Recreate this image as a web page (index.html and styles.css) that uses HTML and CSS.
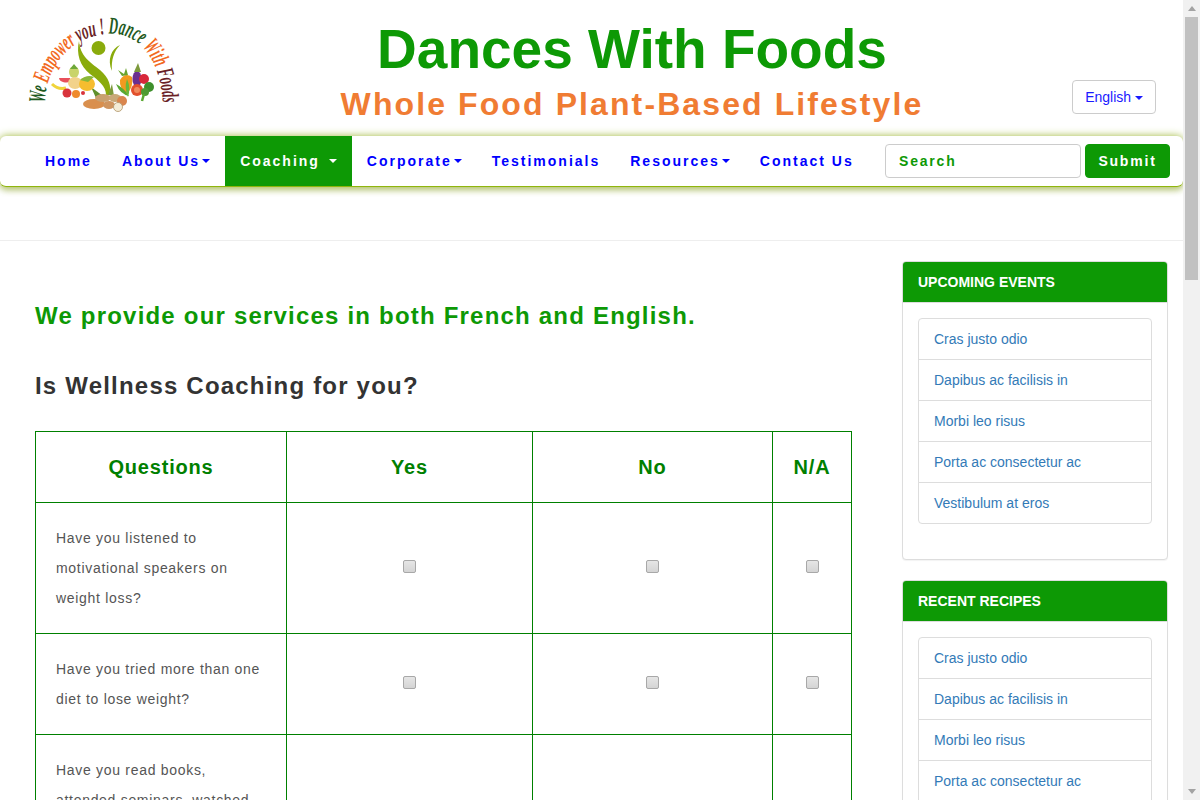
FILE: index.html
```html
<!DOCTYPE html>
<html lang="en">
<head>
<meta charset="utf-8">
<title>Dances With Foods</title>
<link rel="stylesheet" href="styles.css">
</head>
<body>
<div class="scrollbar" aria-hidden="true">
  <span class="sb-btn"><span class="sb-up"></span></span>
  <span class="sb-thumb"></span>
  <span class="sb-fill"></span>
  <span class="sb-btn"><span class="sb-down"></span></span>
</div>
<div class="page">
  <header class="masthead">
    <a class="logo" href="#">
      <svg class="logo-svg" viewBox="0 0 200 136" width="200" height="136" role="img" aria-label="Dances With Foods logo">
        <defs>
          <path id="logo-arc" d="M45 103 C 45 72, 66 40, 100 35 C 130 28, 160 48, 163 106"/>
        </defs>
        <text class="logo-text"><textPath href="#logo-arc" textLength="202" lengthAdjust="spacingAndGlyphs"><tspan class="lt-green">We </tspan><tspan class="lt-orange">Empower </tspan><tspan class="lt-red">you ! </tspan><tspan class="lt-green">Dance </tspan><tspan class="lt-orange">With </tspan><tspan class="lt-red">Foods</tspan></textPath></text>
        <path class="fig" d="M79 41 C 80 56, 90 62, 100 70 C 109 78, 112 86, 109 95 L 106 95 C 106 86, 98 80, 90 74 C 80 66, 76 54, 79 41Z"/>
        <circle class="fig" cx="98.500" cy="48" r="7"/>
        <path class="fig" d="M120 45 C 111 49, 107 60, 112 71 C 111 60, 114 51, 120 45Z"/>
        <path fill="#5f8f2a" d="M91 87 L 103 96 L 96 98Z"/>
        <path fill="#7d9a3c" d="M108 95 L 112 84 L 114 96Z"/>
        <ellipse cx="74" cy="72" rx="5" ry="6" fill="#c9d46a"/>
        <path fill="#6ea83a" d="M74 64 L 70 69 L 78 69Z"/>
        <path fill="#e8505b" d="M59 78 A 7 5 0 0 0 71 81 L 70 78Z"/>
        <ellipse cx="75" cy="83" rx="7" ry="6" fill="#f2d28a"/>
        <ellipse cx="87" cy="84" rx="8" ry="7" fill="#f6bd2f"/>
        <path fill="#8ab83a" d="M80 80 Q 87 74, 94 77 L 88 82Z"/>
        <path d="M52 84 Q 58 90, 66 88" stroke="#f0d43a" stroke-width="3" fill="none"/>
        <circle cx="67" cy="93" r="4.500" fill="#d8343c"/>
        <circle cx="76" cy="94" r="4" fill="#ef8a2c"/>
        <circle cx="83" cy="93" r="2" fill="#d8343c"/>
        <path fill="#f29a1f" d="M120 80 Q 125 72, 132 77 Q 134 86, 127 94 Q 119 88, 120 80Z"/>
        <path fill="#6aa32f" d="M118 70 L 124 74 L 126 68 L 128 75 L 122 76Z"/>
        <ellipse cx="137" cy="79" rx="4.500" ry="8" fill="#6a2f8f"/>
        <path fill="#7d9a3c" d="M138 63 L 134 72 L 141 72Z"/>
        <circle cx="144" cy="79" r="5" fill="#d8283a"/>
        <circle cx="137" cy="90" r="6" fill="#e2502c"/>
        <circle cx="137" cy="90" r="3" fill="#f08a5c"/>
        <circle cx="149" cy="87" r="5" fill="#3f8f2c"/>
        <circle cx="145" cy="92" r="4" fill="#4e9a32"/>
        <path d="M144 94 L 142 101" stroke="#5aa832" stroke-width="2.500"/>
        <path fill="#5aa832" d="M116 84 Q 124 88, 129 96 Q 120 94, 116 84Z"/>
        <path fill="#6ab83a" d="M127 79 Q 131 88, 128 97 Q 124 88, 127 79Z"/>
        <ellipse cx="94" cy="104" rx="11" ry="5" fill="#d98f4e"/>
        <ellipse cx="103" cy="98" rx="8" ry="4" fill="#c9a070"/>
        <ellipse cx="109" cy="105" rx="6" ry="4" fill="#cf9560"/>
        <ellipse cx="115" cy="98" rx="6" ry="4" fill="#c9a878"/>
        <circle cx="122" cy="101" r="5" fill="#d9864e"/>
        <circle cx="118" cy="107" r="4.500" fill="#f4ecd6" stroke="#b09468" stroke-width="0.800"/>
      </svg>
    </a>
    <div class="brand">
      <h1 class="brand-title">Dances With Foods</h1>
      <p class="brand-sub">Whole Food Plant-Based Lifestyle</p>
    </div>
    <div class="lang">
      <button class="lang-btn" type="button">English <span class="caret caret-tight"></span></button>
    </div>
  </header>

  <nav class="navbar">
    <ul class="nav-list">
      <li><a class="nav-link" href="#">Home</a></li>
      <li><a class="nav-link" href="#">About Us<span class="caret"></span></a></li>
      <li><a class="nav-link is-active" href="#">Coaching <span class="caret caret-wide"></span></a></li>
      <li><a class="nav-link" href="#">Corporate<span class="caret"></span></a></li>
      <li><a class="nav-link" href="#">Testimonials</a></li>
      <li><a class="nav-link" href="#">Resources<span class="caret"></span></a></li>
      <li><a class="nav-link" href="#">Contact Us</a></li>
    </ul>
    <form class="search">
      <input class="search-input" type="text" placeholder="Search">
      <button class="search-btn" type="button">Submit</button>
    </form>
  </nav>

  <div class="spacer"></div>

  <div class="content">
    <main class="main">
      <h2 class="lead-title">We provide our services in both French and English.</h2>
      <h3 class="sub-title">Is Wellness Coaching for you?</h3>
      <table class="quiz">
        <colgroup>
          <col class="col-q"><col class="col-yes"><col class="col-no"><col class="col-na">
        </colgroup>
        <thead>
          <tr><th>Questions</th><th>Yes</th><th>No</th><th>N/A</th></tr>
        </thead>
        <tbody>
          <tr>
            <td class="q">Have you listened to motivational speakers on weight loss?</td>
            <td class="c"><input class="check" type="checkbox"></td>
            <td class="c"><input class="check" type="checkbox"></td>
            <td class="c"><input class="check" type="checkbox"></td>
          </tr>
          <tr>
            <td class="q">Have you tried more than one diet to lose weight?</td>
            <td class="c"><input class="check" type="checkbox"></td>
            <td class="c"><input class="check" type="checkbox"></td>
            <td class="c"><input class="check" type="checkbox"></td>
          </tr>
          <tr>
            <td class="q">Have you read books, attended seminars, watched videos or followed programs on weight loss?</td>
            <td class="c"><input class="check" type="checkbox"></td>
            <td class="c"><input class="check" type="checkbox"></td>
            <td class="c"><input class="check" type="checkbox"></td>
          </tr>
        </tbody>
      </table>
    </main>
    <aside class="side">
      <section class="panel">
        <h4 class="panel-head">UPCOMING EVENTS</h4>
        <div class="panel-body">
          <ul class="list">
            <li><a href="#">Cras justo odio</a></li>
            <li><a href="#">Dapibus ac facilisis in</a></li>
            <li><a href="#">Morbi leo risus</a></li>
            <li><a href="#">Porta ac consectetur ac</a></li>
            <li><a href="#">Vestibulum at eros</a></li>
          </ul>
        </div>
      </section>
      <section class="panel">
        <h4 class="panel-head">RECENT RECIPES</h4>
        <div class="panel-body">
          <ul class="list">
            <li><a href="#">Cras justo odio</a></li>
            <li><a href="#">Dapibus ac facilisis in</a></li>
            <li><a href="#">Morbi leo risus</a></li>
            <li><a href="#">Porta ac consectetur ac</a></li>
            <li><a href="#">Vestibulum at eros</a></li>
          </ul>
        </div>
      </section>
    </aside>
  </div>
</div>
</body>
</html>
```
FILE: styles.css
```css
* {
  box-sizing: border-box;
}
body {
  margin: 0;
  background: #fff;
  color: #333;
  font-family: "Liberation Sans", Arial, sans-serif;
  font-size: 14px;
  line-height: 20px;
}
.page {
  margin-right: 17px;
  min-height: 2330px;
}

/* Window scrollbar, drawn over the page edge */
.scrollbar {
  position: fixed;
  top: 0;
  right: 0;
  bottom: 0;
  z-index: 10;
  display: flex;
  flex-direction: column;
  width: 17px;
  background: #f1f1f1;
}
.sb-btn {
  display: flex;
  align-items: center;
  justify-content: center;
  height: 17px;
}
.sb-thumb {
  height: 263px;
  margin: 0 2px;
  background: #c1c1c1;
}
.sb-fill {
  flex: 1;
}
.sb-up,
.sb-down {
  width: 0;
  height: 0;
  border-left: 4px solid transparent;
  border-right: 4px solid transparent;
}
.sb-up {
  border-bottom: 5px solid #a3a3a3;
}
.sb-down {
  border-top: 5px solid #a3a3a3;
}

/* Masthead */
.masthead {
  display: grid;
  grid-template-columns: 280px 704px 1fr;
  height: 136px;
}
.logo {
  display: block;
  height: 136px;
}
.logo-svg {
  display: block;
}
.logo-text {
  font-family: "Liberation Serif", serif;
  font-style: italic;
  font-weight: 700;
  font-size: 24px;
}
.lt-green { fill: #1f5a22; }
.lt-orange { fill: #f2691e; }
.lt-red { fill: #6a1f26; }
.fig { fill: #8aab0c; }
.brand {
  text-align: center;
  padding-top: 14px;
}
.brand-title {
  margin: 0;
  color: #0d9905;
  font-size: 55px;
  line-height: 70px;
  font-weight: 700;
}
.brand-sub {
  margin: 2px 0 0;
  color: #f07c33;
  font-size: 32px;
  line-height: 36px;
  font-weight: 700;
  letter-spacing: 2.1px;
}
.lang {
  display: flex;
  justify-content: flex-end;
  align-items: flex-start;
  padding: 80px 27px 0 0;
}
.lang-btn {
  height: 34px;
  padding: 6px 12px;
  background: #fff;
  border: 1px solid #ccc;
  border-radius: 4px;
  color: #1a1aff;
  font: 14px/20px "Liberation Sans", Arial, sans-serif;
}
.caret {
  display: inline-block;
  width: 0;
  height: 0;
  margin-left: 2px;
  vertical-align: middle;
  border-top: 4px solid;
  border-left: 4px solid transparent;
  border-right: 4px solid transparent;
}
.caret-wide {
  margin-left: 3px;
}
.caret-tight {
  margin-left: 0;
}

/* Navbar */
.navbar {
  display: flex;
  align-items: center;
  justify-content: space-between;
  height: 51px;
  padding: 0 13px 0 30px;
  background: #fff;
  border-bottom: 1px solid #8fb50d;
  border-radius: 6px;
  box-shadow: 0 0 8px #a9c04a, 0 3px 6px rgba(110, 130, 20, 0.35);
}
.nav-list {
  display: flex;
  align-self: stretch;
  margin: 0;
  padding: 0;
  list-style: none;
}
.nav-link {
  display: flex;
  align-items: center;
  height: 50px;
  padding: 0 15px;
  color: #0000ff;
  font-size: 14px;
  font-weight: 700;
  letter-spacing: 2px;
  text-decoration: none;
  white-space: pre;
}
.nav-link.is-active {
  background: #0d9905;
  color: #fff;
}
.search {
  display: flex;
  gap: 4px;
  margin: 0;
}
.search-input {
  width: 196px;
  height: 34px;
  padding: 6px 13px;
  background: #fff;
  border: 1px solid #ccc;
  border-radius: 4px;
  color: #0d9905;
  font: 700 14px/20px "Liberation Sans", Arial, sans-serif;
  letter-spacing: 1.8px;
}
.search-input::placeholder {
  color: #0d9905;
  opacity: 1;
}
.search-btn {
  width: 85px;
  height: 34px;
  padding: 0;
  background: #0d9905;
  border: 1px solid #0d9905;
  border-radius: 4px;
  color: #fff;
  font: 700 14px/20px "Liberation Sans", Arial, sans-serif;
  letter-spacing: 1.8px;
}
.spacer {
  height: 54px;
  border-bottom: 1px solid #eee;
}

/* Content */
.content {
  display: grid;
  grid-template-columns: 817px 266px;
  column-gap: 50px;
  padding: 20px 15px 0 35px;
}
.lead-title {
  margin: 40px 0 0;
  color: #0d9905;
  font-size: 24px;
  line-height: 30px;
  font-weight: 700;
  letter-spacing: 1.2px;
}
.sub-title {
  margin: 40px 0 30px;
  color: #333;
  font-size: 24px;
  line-height: 30px;
  font-weight: 700;
  letter-spacing: 1.2px;
}
.quiz {
  width: 816px;
  border-collapse: collapse;
  table-layout: fixed;
}
.col-q { width: 251px; }
.col-yes { width: 246px; }
.col-no { width: 240px; }
.col-na { width: 79px; }
.quiz th,
.quiz td {
  border: 1px solid #008000;
  padding: 20px;
  line-height: 30px;
}
.quiz th {
  padding: 20px 0;
  color: #008000;
  font-size: 20px;
  font-weight: 700;
  letter-spacing: 0.8px;
  text-align: center;
}
.q {
  color: #555;
  font-size: 14px;
  letter-spacing: 0.7px;
}
.quiz td.c {
  padding: 20px 0;
  text-align: center;
  vertical-align: middle;
}
.check {
  appearance: none;
  display: inline-block;
  width: 13px;
  height: 13px;
  margin: 0 0 6px;
  vertical-align: middle;
  background: linear-gradient(#e6e6e6, #d4d4d4);
  border: 1px solid #a8a8a8;
  border-radius: 2px;
}

/* Sidebar */
.panel {
  margin-bottom: 20px;
  background: #fff;
  border: 1px solid #ddd;
  border-radius: 4px;
  box-shadow: 0 1px 1px rgba(0, 0, 0, 0.05);
}
.panel-head {
  margin: 0;
  padding: 10px 15px;
  height: 40px;
  background: #0d9905;
  border-radius: 3px 3px 0 0;
  color: #fff;
  font-size: 14px;
  line-height: 20px;
  font-weight: 700;
}
.panel-body {
  padding: 15px;
  border-top: 1px solid #ddd;
}
.list {
  margin: 0 0 20px;
  padding: 0;
  list-style: none;
}
.list li {
  padding: 10px 15px;
  margin-bottom: -1px;
  background: #fff;
  border: 1px solid #ddd;
}
.list li:first-child {
  border-radius: 4px 4px 0 0;
}
.list li:last-child {
  margin-bottom: 0;
  border-radius: 0 0 4px 4px;
}
.list a {
  color: #337ab7;
  text-decoration: none;
}
```
